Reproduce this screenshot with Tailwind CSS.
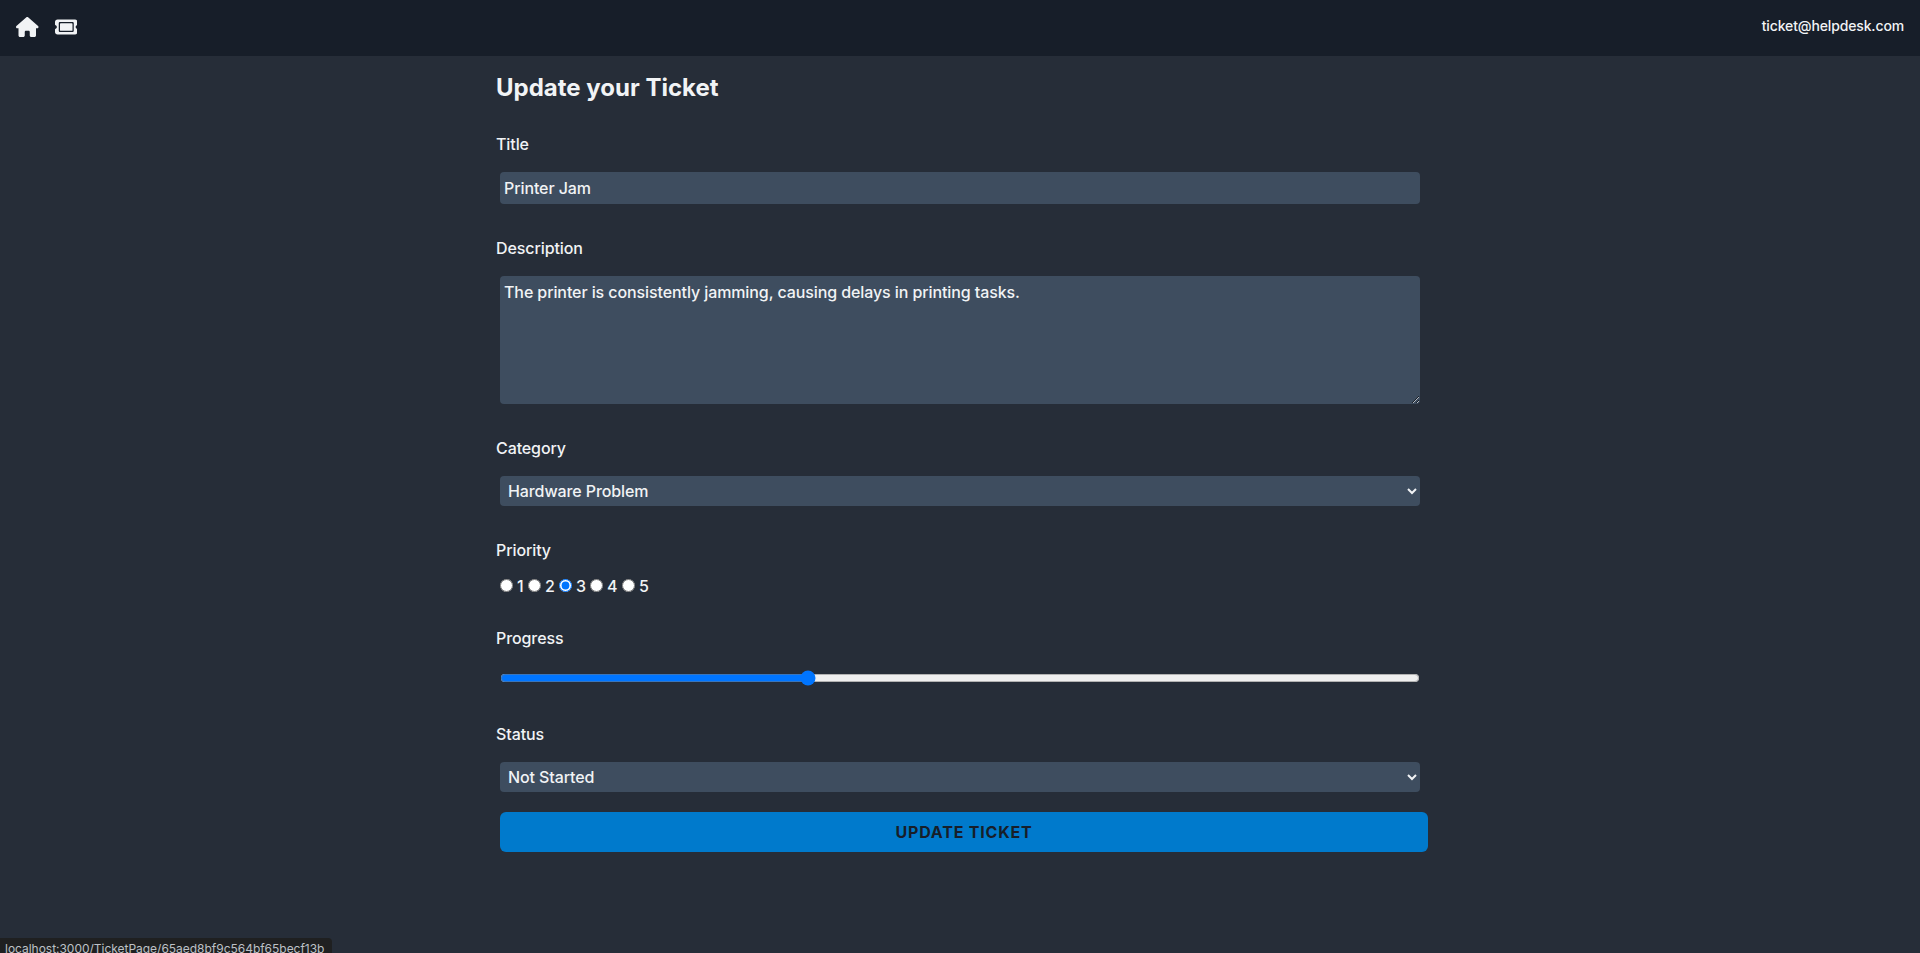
<!DOCTYPE html>
<html lang="en">
<head>
<meta charset="utf-8">
<title>Update your Ticket</title>
<script src="https://cdn.jsdelivr.net/npm/@tailwindcss/browser@4"></script>
</head>
<body class="flex h-screen flex-col overflow-hidden bg-[#262d38] font-['Inter',sans-serif] text-base text-[#f1f3f5]">
<nav class="flex h-14 shrink-0 items-center justify-between bg-[#171e29] px-4 pb-1">
  <div class="flex items-center gap-4">
    <a href="#" aria-label="Home"><svg class="mt-0.5 h-5 w-[22.5px]" viewBox="0 0 576 512" fill="currentColor"><path d="M575.8 255.5c0 18-15 32.1-32 32.1h-32l.7 160.2c0 2.7-.2 5.4-.5 8.1V472c0 22.1-17.9 40-40 40h-16c-1.1 0-2.2 0-3.3-.1-1.4.1-2.8.1-4.2.1H392c-22.100 0-40-17.900-40-40v-88c0-17.700-14.300-32-32-32h-64c-17.700 0-32 14.300-32 32v88c0 22.100-17.900 40-40 40h-55.900c-1.500 0-3-.1-4.500-.2-1.200.1-2.400.2-3.600.2h-16c-22.100 0-40-17.900-40-40V360c0-.9 0-1.900.1-2.800v-69.600H32c-18 0-32-14-32-32.100 0-9 3-17 10-24L266.400 8c7-7 15-8 22-8s15 2 21 7l255.400 224.500c8 7 12 15 11 24z"/></svg></a>
    <a href="#" aria-label="Tickets"><svg class="mt-0.5 h-5 w-[22.5px]" viewBox="0 0 576 512" fill="currentColor"><path d="M64 64C28.700 64 0 92.700 0 128v64c0 8.800 7.400 15.700 15.700 18.600C34.500 217.100 48 235 48 256s-13.500 38.900-32.300 45.400C7.400 304.300 0 311.200 0 320v64c0 35.300 28.700 64 64 64h448c35.300 0 64-28.700 64-64v-64c0-8.800-7.400-15.700-15.700-18.600C541.500 294.900 528 277 528 256s13.500-38.900 32.300-45.400c8.300-2.900 15.700-9.800 15.700-18.600v-64c0-35.300-28.700-64-64-64H64zm64 112v160c0 8.800 7.200 16 16 16h288c8.800 0 16-7.200 16-16V176c0-8.800-7.200-16-16-16H144c-8.800 0-16 7.200-16 16zM96 160c0-17.700 14.300-32 32-32h320c17.700 0 32 14.300 32 32v192c0 17.700-14.300 32-32 32H128c-17.700 0-32-14.300-32-32V160z"/></svg></a>
  </div>
  <p class="text-sm font-[450] tracking-[-0.01em]">ticket@helpdesk.com</p>
</nav>
<main class="flex grow justify-center">
  <form class="flex w-[928px] flex-col pt-4 font-[450] tracking-[-0.006em]">
    <h3 class="mb-7 text-2xl leading-8 font-bold tracking-normal">Update your Ticket</h3>
    <label>Title</label>
    <input type="text" value="Printer Jam" class="mx-1 mt-4 mb-8 h-8 rounded bg-[#3e4d5f] p-1">
    <label>Description</label>
    <textarea rows="5" class="mx-1 mt-4 mb-8 h-32 shrink-0 rounded bg-[#3e4d5f] p-1">The printer is consistently jamming, causing delays in printing tasks.</textarea>
    <label>Category</label>
    <select class="mx-1 mt-4 mb-8 h-[30px] rounded bg-[#3e4d5f] px-1"><option>Hardware Problem</option></select>
    <label>Priority</label>
    <div class="mt-3 mb-7 flex h-6 items-center pl-1">
      <span class="flex w-[28px] items-center gap-1"><input type="radio" name="p" class="mb-px size-[13px] shrink-0 accent-[#0075ff]">1</span>
      <span class="flex w-[31px] items-center gap-1"><input type="radio" name="p" class="mb-px size-[13px] shrink-0 accent-[#0075ff]">2</span>
      <span class="flex w-[31px] items-center gap-1"><input type="radio" name="p" checked class="mb-px size-[13px] shrink-0 accent-[#0075ff]">3</span>
      <span class="flex w-[32px] items-center gap-1"><input type="radio" name="p" class="mb-px size-[13px] shrink-0 accent-[#0075ff]">4</span>
      <span class="flex items-center gap-1"><input type="radio" name="p" class="mb-px size-[13px] shrink-0 accent-[#0075ff]">5</span>
    </div>
    <label>Progress</label>
    <input type="range" min="0" max="100" step="any" value="33.2" class="mx-1 mt-5 mb-9 h-4 accent-[#0075ff]">
    <label>Status</label>
    <select class="mx-1 mt-4 mb-5 h-[30px] rounded bg-[#3e4d5f] px-1"><option>Not Started</option></select>
    <button type="submit" class="-mr-1 ml-1 h-10 rounded-md bg-[#007acc] font-bold tracking-wider text-[#171e29]">UPDATE TICKET</button>
  </form>
</main>
<div class="fixed top-[938px] left-0 h-5 w-[332px] rounded-tr bg-[#1f2021] pt-0.5 pl-[5px] text-xs leading-[18px] tracking-[-0.002em] whitespace-nowrap text-[#bdc1c6]">localhost:3000/TicketPage/65aed8bf9c564bf65becf13b</div>
</body>
</html>
